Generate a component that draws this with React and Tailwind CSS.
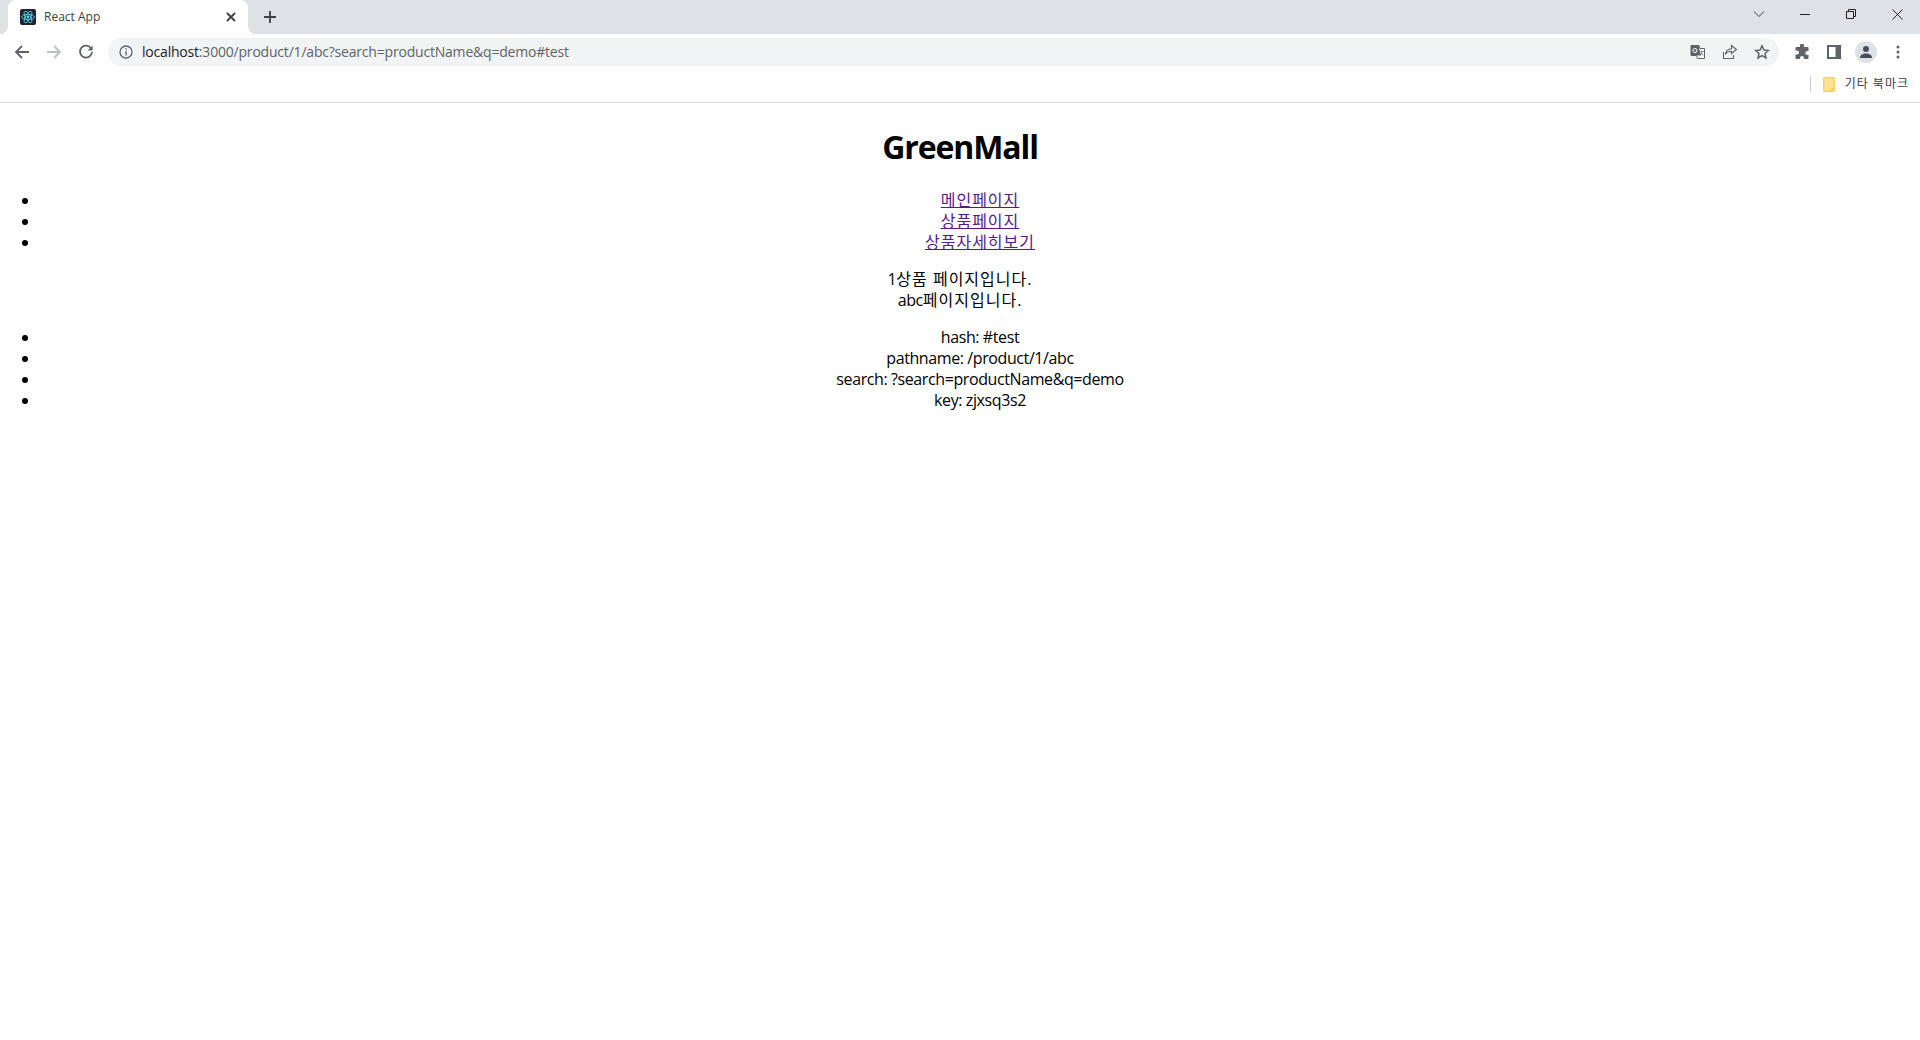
import React from "react";

const uiFont = "font-['Open_Sans','Noto_Sans_CJK_KR',sans-serif]";

function Slot({ w = "w-8", children }) {
  return <div className={`${w} h-full flex items-center justify-center shrink-0`}>{children}</div>;
}

// Korean glyphs run narrower here than in the reference's font
function Ko({ children }) {
  return <span className="tracking-[1px]">{children}</span>;
}

function ReactFavicon() {
  return (
    <svg width="16" height="16" viewBox="0 0 16 16">
      <rect width="16" height="16" rx="2" fill="#20232a" />
      <g fill="none" stroke="#61dafb" strokeWidth="0.8">
        <ellipse cx="8" cy="8" rx="6.4" ry="2.6" />
        <ellipse cx="8" cy="8" rx="6.4" ry="2.6" transform="rotate(60 8 8)" />
        <ellipse cx="8" cy="8" rx="6.4" ry="2.6" transform="rotate(120 8 8)" />
      </g>
      <circle cx="8" cy="8" r="1.4" fill="#61dafb" />
    </svg>
  );
}

function WindowControls() {
  return (
    <div className="flex h-7">
      <Slot w="w-[46px]">
        <svg width="12" height="8" viewBox="0 0 12 8" fill="none" stroke="#3c4043" strokeWidth="1">
          <path d="M1 1.5l5 5 5-5" />
        </svg>
      </Slot>
      <Slot w="w-[46px]">
        <svg width="10" height="10" viewBox="0 0 10 10" stroke="#202124" strokeWidth="1">
          <path d="M0 5.5h10" />
        </svg>
      </Slot>
      <Slot w="w-[46px]">
        <svg width="10" height="10" viewBox="0 0 10 10" fill="none" stroke="#202124" strokeWidth="1">
          <path d="M.5 2.5h7v7h-7zM2.5 2.5v-2h7v7h-2" />
        </svg>
      </Slot>
      <Slot w="w-[46px]">
        <svg width="11" height="11" viewBox="0 0 11 11" fill="none" stroke="#202124" strokeWidth="1">
          <path d="M.5.5l10 10M10.5.5l-10 10" />
        </svg>
      </Slot>
    </div>
  );
}

function TabStrip() {
  return (
    <div className="h-[34px] bg-[#dee1e6] flex items-stretch pl-2">
      <div className="relative w-[240px] bg-white rounded-t-lg flex items-center pl-3 pr-1.5">
        <svg className="absolute left-[-8px] bottom-0" width="8" height="8" viewBox="0 0 8 8">
          <path d="M8 0v8H0a8 8 0 0 0 8-8z" fill="#fff" />
        </svg>
        <svg className="absolute right-[-8px] bottom-0" width="8" height="8" viewBox="0 0 8 8">
          <path d="M0 0v8h8a8 8 0 0 1-8-8z" fill="#fff" />
        </svg>
        <ReactFavicon />
        <span className={`ml-2 text-xs text-[#3c4043] flex-1 ${uiFont}`}>React App</span>
        <svg width="22" height="22" viewBox="0 0 22 22" fill="none" stroke="#3c4043" strokeWidth="1.8">
          <path d="M7 7l8 8M15 7l-8 8" />
        </svg>
      </div>
      <div className="w-[44px] flex items-center justify-center">
        <svg width="14" height="14" viewBox="0 0 14 14" fill="none" stroke="#3c4043" strokeWidth="1.8">
          <path d="M7 1v12M1 7h12" />
        </svg>
      </div>
      <div className="flex-1" />
      <WindowControls />
    </div>
  );
}

function NavIcons() {
  return (
    <>
      <Slot>
        <svg width="16" height="16" viewBox="0 0 16 16" fill="none" stroke="#5f6368" strokeWidth="1.8">
          <path d="M15 8H2M8 2L2 8l6 6" />
        </svg>
      </Slot>
      <Slot>
        <svg width="16" height="16" viewBox="0 0 16 16" fill="none" stroke="#bcbfc3" strokeWidth="1.8">
          <path d="M1 8h13M8 2l6 6-6 6" />
        </svg>
      </Slot>
      <Slot>
        <svg width="16" height="16" viewBox="0 0 16 16" fill="none">
          <path d="M13.2 4.6A6 6 0 1 0 14 8" stroke="#5f6368" strokeWidth="1.8" />
          <path d="M14.6 1.4v5h-5z" fill="#5f6368" />
        </svg>
      </Slot>
    </>
  );
}

function OmniboxActions() {
  return (
    <div className="flex items-center h-full pr-px">
      <Slot>
        <svg width="16" height="16" viewBox="0 0 16 16">
          <path d="M1 1.5h8l1 3h4.5v10H7.5l-1-3H1z" fill="#fff" stroke="#5f6368" strokeWidth="1" />
          <path d="M1 1.5h7.5l2.5 10H1z" fill="#5f6368" />
          <circle cx="5" cy="6.5" r="2" fill="none" stroke="#fff" strokeWidth="1" />
          <path d="M10.5 7.5h3M12 7c0 2-1 3.500-2 4M11 9c.5 1 1.500 1.700 2.500 2" fill="none" stroke="#5f6368" strokeWidth="0.8" />
        </svg>
      </Slot>
      <Slot>
        <svg width="16" height="16" viewBox="0 0 16 16" fill="none" stroke="#5f6368" strokeWidth="1.1">
          <path d="M1.500 8v6.500h10V11" />
          <path d="M9.500 1.500l5 4-5 4V7.200c-3 0-5 1-6.200 3.300.4-3.500 2.500-5.500 6.200-5.800z" />
        </svg>
      </Slot>
      <Slot>
        <svg width="16" height="16" viewBox="0 0 16 16" fill="none" stroke="#5f6368" strokeWidth="1.500">
          <path d="M8 1.800l1.900 4.200 4.500.5-3.400 3 1 4.500L8 11.700 4 14l1-4.500-3.400-3 4.500-.5z" />
        </svg>
      </Slot>
    </div>
  );
}

function ToolbarRight() {
  return (
    <>
      <Slot>
        <svg width="16" height="16" viewBox="0 0 16 16" fill="#5f6368">
          <path d="M6 1.500a2 2 0 0 1 4 0V3h3.500a1 1 0 0 1 1 1v3h-1.200a2 2 0 0 0 0 4h1.200v3a1 1 0 0 1-1 1H10v-1a2 2 0 0 0-4 0v1H2.500a1 1 0 0 1-1-1v-3.500H3a2 2 0 0 0 0-4H1.500V4a1 1 0 0 1 1-1H6z" />
        </svg>
      </Slot>
      <Slot>
        <svg width="14" height="14" viewBox="0 0 14 14">
          <rect x="0" y="0" width="14" height="14" fill="#5f6368" />
          <rect x="2" y="2" width="6.500" height="10" fill="#fff" />
        </svg>
      </Slot>
      <Slot>
        <div className="w-[22px] h-[22px] rounded-full bg-[#dee1e6] flex items-center justify-center">
          <svg width="14" height="14" viewBox="0 0 14 14" fill="#474c5a">
            <circle cx="7" cy="4" r="3" />
            <path d="M1 13c0-3 2.500-4.500 6-4.500S13 10 13 13z" />
          </svg>
        </div>
      </Slot>
      <Slot>
        <svg width="4" height="14" viewBox="0 0 4 14" fill="#5f6368">
          <circle cx="2" cy="2" r="1.500" />
          <circle cx="2" cy="7" r="1.500" />
          <circle cx="2" cy="12" r="1.500" />
        </svg>
      </Slot>
    </>
  );
}

function Toolbar() {
  return (
    <div className="h-[34px] bg-white flex items-center px-1.5 pt-[2px]">
      <NavIcons />
      <div className="ml-1.5 h-7 flex-1 rounded-full bg-[#f1f3f4] flex items-center pl-2">
        <Slot w="w-5">
          <svg width="14" height="14" viewBox="0 0 14 14" fill="none" stroke="#5f6368" strokeWidth="1.300">
            <circle cx="7" cy="7" r="6" />
            <path d="M7 6v4.500M7 3.200v1.500" />
          </svg>
        </Slot>
        <div className={`ml-1.5 flex-1 text-sm tracking-[-0.2px] text-[#5f6368] ${uiFont}`}>
          <span className="text-[#202124]">localhost</span>:3000/product/1/abc?search=productName&amp;q=demo#test
        </div>
        <OmniboxActions />
      </div>
      <div className="w-[7px]" />
      <ToolbarRight />
    </div>
  );
}

function BookmarkBar() {
  return (
    <div className="h-[35px] bg-white border-b border-[#d9d9d9] flex items-center justify-end pr-[11px] pb-[2px]">
      <div className="w-px h-4 bg-[#c8cacc] mr-3" />
      <svg width="12" height="15" viewBox="0 0 12 15">
        <path d="M.7.7h10.600v13.600H.7z" fill="#fde293" stroke="#f2c94c" strokeWidth="1" />
        <path d="M9 14.300v-3h2.300" fill="none" stroke="#f2c94c" strokeWidth="1" />
      </svg>
      <span className={`ml-[10px] text-xs text-[#3c4043] ${uiFont}`}>
        <Ko>기타 북마크</Ko>
      </span>
    </div>
  );
}

const links = ["메인페이지", "상품페이지", "상품자세히보기"];
const locationRows = [
  "hash: #test",
  "pathname: /product/1/abc",
  "search: ?search=productName&q=demo",
  "key: zjxsq3s2",
];

export default function App() {
  return (
    <div className="min-h-screen bg-white">
      <TabStrip />
      <Toolbar />
      <BookmarkBar />
      <div className={`text-center text-black text-base leading-[21px] tracking-[-0.4px] ${uiFont}`}>
        <h1 className="text-[32px] leading-[43px] font-bold tracking-[-1.1px] pt-[22px] pb-[22px]">GreenMall</h1>
        <ul className="list-disc pl-10">
          {links.map((label) => (
            <li key={label}>
              <a href="#" className="text-[#551a8b] underline">
                <Ko>{label}</Ko>
              </a>
            </li>
          ))}
        </ul>
        <p className="my-4">
          1<Ko>상품 페이지입니다.</Ko>
          <br />
          abc<Ko>페이지입니다.</Ko>
        </p>
        <ul className="list-disc pl-10">
          {locationRows.map((row) => (
            <li key={row}>{row}</li>
          ))}
        </ul>
      </div>
    </div>
  );
}
